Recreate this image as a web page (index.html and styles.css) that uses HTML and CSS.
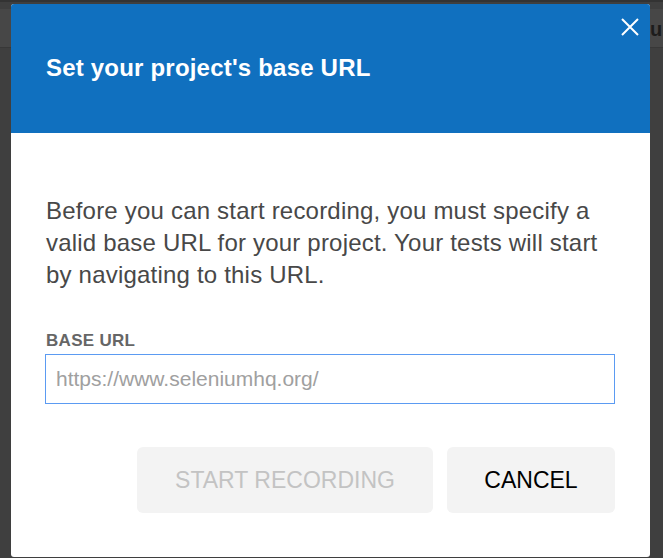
FILE: index.html
```html
<!DOCTYPE html>
<html lang="en">
<head>
  <meta charset="UTF-8" />
  <title>Base URL</title>
  <link rel="stylesheet" href="styles.css">
</head>
<body>

  <!-- page behind the modal -->
  <div class="backdrop">
    <div class="backdrop-bar"></div>
    <div class="backdrop-band"><span class="backdrop-text">u</span></div>
  </div>

  <!-- Base URL dialog -->
  <div class="dialog">
    <div class="dialog-header">
      <h2>Set your project's base URL</h2>
      <button class="close-btn" aria-label="Close">
        <svg width="18" height="18" viewBox="0 0 18 18">
          <path d="M1 1L17 17M17 1L1 17" stroke="#fff" stroke-width="2" fill="none" />
        </svg>
      </button>
    </div>
    <div class="dialog-body">
      <p>Before you can start recording, you must specify a valid base URL for your project. Your tests will start by navigating to this URL.</p>
      <label for="baseUrl">BASE URL</label>
      <input id="baseUrl" placeholder="https://www.seleniumhq.org/" />
      <div class="actions">
        <button class="btn btn-start" disabled>START RECORDING</button>
        <button class="btn btn-cancel">CANCEL</button>
      </div>
    </div>
  </div>

</body>
</html>
```

FILE: styles.css
```css
body {
  font-family: "Liberation Sans", Arial, sans-serif;
  background: #3f3f3f;
  margin: 0;
  padding: 4px 0 0 11px;
  height: 558px;
  box-sizing: border-box;
  overflow: hidden;
}

.backdrop-bar {
  position: absolute;
  top: 0;
  left: 0;
  right: 0;
  height: 2px;
  background: #333;
}

.backdrop-band {
  position: absolute;
  top: 9px;
  left: 0;
  right: 0;
  height: 38px;
  background: #474747;
  border-bottom: 1px solid #383838;
}

.backdrop-text {
  position: absolute;
  top: 9px;
  left: 650px;
  font-size: 20px;
  font-weight: bold;
  color: #1c1c1c;
}

.dialog {
  position: relative;
  width: 639px;
  height: 553px;
  background: #fff;
  border-radius: 3px;
  overflow: hidden;
  display: flex;
  flex-direction: column;
}

.dialog-header {
  height: 129px;
  background: #1070bf;
  padding: 0 35px;
  display: flex;
  align-items: center;
  flex-shrink: 0;
}

.dialog-header h2 {
  margin: 0 0 2px 0;
  color: #fff;
  font-size: 24px;
  font-weight: bold;
  letter-spacing: 0.2px;
}

.close-btn {
  position: absolute;
  top: 14px;
  right: 11px;
  width: 18px;
  height: 18px;
  padding: 0;
  border: none;
  background: none;
  cursor: pointer;
}

.dialog-body {
  padding: 62px 35px 0 34px;
  display: flex;
  flex-direction: column;
}

.dialog-body p {
  margin: 0;
  font-size: 24px;
  line-height: 32px;
  letter-spacing: 0.2px;
  color: #484848;
  padding-left: 1px;
}

label {
  margin-top: 41px;
  font-size: 17px;
  line-height: 18px;
  font-weight: bold;
  letter-spacing: 0.3px;
  color: #666;
  padding-left: 1px;
}

input {
  margin-top: 4px;
  height: 50px;
  box-sizing: border-box;
  border: 1px solid #5b9bf2;
  padding: 0 10px;
  font-family: inherit;
  font-size: 21px;
  color: #333;
  outline: none;
}

input::placeholder {
  color: #a0a0a0;
}

.actions {
  margin-top: 43px;
  display: flex;
  justify-content: flex-end;
  gap: 14px;
}

.btn {
  height: 66px;
  padding: 0;
  border: none;
  border-radius: 6px;
  background: #f3f3f3;
  font-family: inherit;
  font-size: 23px;
  color: #000;
  cursor: pointer;
}

.btn-start {
  width: 296px;
}

.btn-cancel {
  width: 168px;
}

.btn:disabled {
  color: #c3c3c3;
  cursor: default;
}
```
